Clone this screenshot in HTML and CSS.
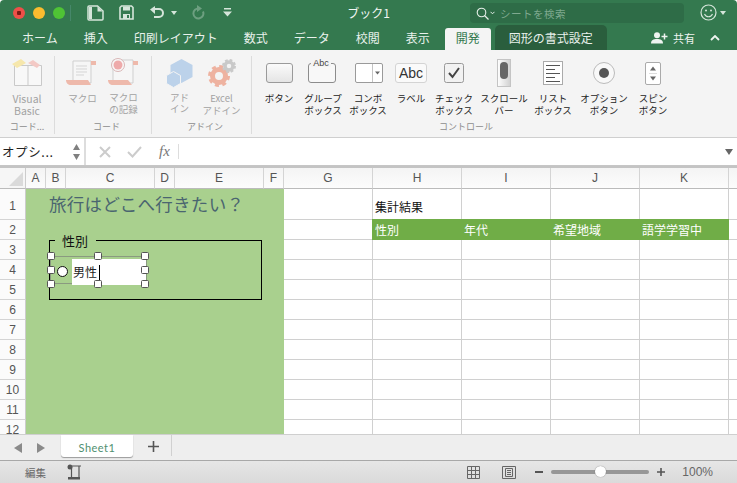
FILE: index.html
```html
<!DOCTYPE html>
<html lang="ja">
<head>
<meta charset="utf-8">
<title>ブック1</title>
<link rel="stylesheet" href="styles.css">
</head>
<body>
<div class="app">
  <header class="titlebar">
    <div class="tb-left">
      <span class="light red"></span><span class="light yellow"></span><span class="light green"></span>
      <span class="tb-div"></span>
      <svg class="qa qa-side" width="17" height="16" viewBox="0 0 17 16"><path d="M2 1h8.500l5.500 5v8a1 1 0 0 1-1 1H2a1 1 0 0 1-1-1V2a1 1 0 0 1 1-1z" fill="none" stroke="#d5e5da" stroke-width="1.500"/><path d="M2 2h3v12H2zM10.500 1.500 15.500 6.500h-5z" fill="#d5e5da"/></svg>
      <svg class="qa qa-save" width="15" height="15" viewBox="0 0 15 15"><path d="M1 2.500 2.500 1h10L14 2.500V14H1z" fill="none" stroke="#d5e5da" stroke-width="1.600"/><path d="M4 1.500h7v4H4zM4 9h7v5H4z" fill="#d5e5da"/><path d="M8 10h2v3H8z" fill="#34794f"/></svg>
      <svg class="qa qa-undo" width="16" height="13" viewBox="0 0 16 13"><path d="M5 11h5a4 4 0 0 0 0-8H3" fill="none" stroke="#d5e5da" stroke-width="2"/><path d="M1 3.500 6 0v8z" fill="#d5e5da"/></svg>
      <span class="caret qa-caret"></span>
      <svg class="qa qa-redo" width="14" height="15" viewBox="0 0 14 15"><path d="M8 3.500a5 5 0 1 0 4 3" fill="none" stroke="#6d9f80" stroke-width="2"/><path d="M6 0l5 3.500L6 7z" fill="#6d9f80"/></svg>
      <svg class="qa qa-more" width="9" height="9" viewBox="0 0 9 9"><path d="M1 0h7v1.400H1zM0 3.500h9L4.500 8.500z" fill="#d5e5da"/></svg>
    </div>
    <div class="doc-title">ブック1</div>
    <div class="tb-right">
      <div class="search">
        <svg width="13" height="13" viewBox="0 0 13 13"><circle cx="5.500" cy="5.500" r="4.300" fill="none" stroke="#e6efe9" stroke-width="1.100"/><path d="m8.500 8.500 4 4" stroke="#e6efe9" stroke-width="1.200"/></svg>
        <svg class="chev" width="5" height="4" viewBox="0 0 5 4"><path d="m.5.800 2 2 2-2" fill="none" stroke="#e6efe9"/></svg>
        <span class="search-text">シートを検索</span>
      </div>
      <svg class="smile" width="17" height="17" viewBox="0 0 17 17"><circle cx="8.500" cy="8.500" r="7.500" fill="none" stroke="#d5e5da" stroke-width="1.200"/><circle cx="6" cy="6.500" r="1" fill="#d5e5da"/><circle cx="11" cy="6.500" r="1" fill="#d5e5da"/><path d="M4.500 10a4.300 4.300 0 0 0 8 0" fill="none" stroke="#d5e5da" stroke-width="1.100"/></svg>
      <span class="caret"></span>
    </div>
  </header>

  <nav class="tabs">
    <span class="tab">ホーム</span><span class="tab">挿入</span><span class="tab">印刷レイアウト</span><span class="tab">数式</span><span class="tab">データ</span><span class="tab">校閲</span><span class="tab">表示</span>
    <span class="tab tab-active">開発</span>
    <span class="tab tab-shape">図形の書式設定</span>
    <div class="tabs-right">
      <svg width="17" height="12" viewBox="0 0 17 12"><circle cx="6" cy="3.200" r="3" fill="#eef4f0"/><path d="M0 11.500c0-3.500 2.500-4.500 6-4.500s6 1 6 4.500z" fill="#eef4f0"/><path d="M13.500 1.500v6M10.500 4.500h6" stroke="#eef4f0" stroke-width="1.500"/></svg>
      <span class="share">共有</span>
      <svg class="collapse" width="10" height="6" viewBox="0 0 10 6"><path d="M1 5l4-4 4 4" fill="none" stroke="#eef4f0" stroke-width="1.800"/></svg>
    </div>
  </nav>

  <section class="ribbon">
    <div class="group g-code">
      <div class="items">
        <div class="item w54 off">
          <svg class="ic" width="40" height="36" viewBox="0 0 40 36"><path d="M7.500 9.500h27v20h-27z" fill="#f8f8f8" stroke="#c9c9c9"/><path d="M21 9.500v20" stroke="#c9c9c9"/><path d="m5 8 9-5 5 4-9 5z" fill="#f6e7ac"/><path d="m21 7 5-3 7 5-3 3z" fill="#f3c9c5"/></svg>
          <span class="lbl lbl-latin">Visual<br>Basic</span>
        </div>
      </div>
      <div class="glabel">コード...</div>
    </div>
    <div class="group g-macro">
      <div class="items">
        <div class="item w41 off">
          <svg class="ic" width="40" height="36" viewBox="0 0 40 36"><path d="M10 5h18v22H10z" fill="#f6f6f6" stroke="#cfcfcf"/><path d="M28 5h5v4h-5z" fill="#eeb9ab"/><path d="M3 24h22l3 5H8c-3 0-5-2-5-5z" fill="#eeb9ab"/><path d="M13 10h11M13 13h11M13 16h11M13 19h8" stroke="#d5d5d5"/></svg>
          <span class="lbl">マクロ</span>
        </div>
        <div class="item w41 off">
          <svg class="ic" width="40" height="36" viewBox="0 0 40 36"><path d="M9 4h20v23H9z" fill="#f6f6f6" stroke="#cfcfcf"/><path d="M29 5h5v4h-5z" fill="#eeb9ab"/><path d="M4 24h20l4 5H9c-3 0-5-2-5-5z" fill="#eeb9ab"/><circle cx="14" cy="9" r="6.500" fill="#f8f8f8" stroke="#d9b5b5"/><circle cx="14" cy="9" r="4.500" fill="#eeaaaa"/></svg>
          <span class="lbl lbl-low">マクロ<br>の記録</span>
        </div>
      </div>
      <div class="glabel">コード</div>
    </div>
    <div class="group g-addin">
      <div class="items">
        <div class="item w41 off">
          <svg class="ic" width="40" height="36" viewBox="0 0 40 36"><path d="M21.500 3l11 6v12l-11 6-11-6V9z" fill="#bcd2ea"/><path d="M13.500 15.500l7 4v8l-7 4-7-4v-8z" fill="#bcd2ea" stroke="#f4f4f4"/></svg>
          <span class="lbl lbl-tight">アド<br>イン</span>
        </div>
        <div class="item w43 off">
          <svg class="ic" width="40" height="36" viewBox="0 0 40 36"><circle cx="17" cy="20" r="6.500" fill="none" stroke="#eeb2a0" stroke-width="5"/><circle cx="17" cy="20" r="9.500" fill="none" stroke="#eeb2a0" stroke-width="3" stroke-dasharray="4 3.450"/><circle cx="27" cy="10" r="4" fill="none" stroke="#c9c9c9" stroke-width="3.500"/><circle cx="27" cy="10" r="6" fill="none" stroke="#c9c9c9" stroke-width="2" stroke-dasharray="2.700 2"/></svg>
          <span class="lbl">Excel<br>アドイン</span>
        </div>
      </div>
      <div class="glabel">アドイン</div>
    </div>
    <div class="group g-control">
      <div class="items">
        <div class="item w44">
          <svg class="ic" width="40" height="36" viewBox="0 0 40 36"><defs><linearGradient id="btn" x1="0" y1="0" x2="0" y2="1"><stop offset="0" stop-color="#fbfbfb"/><stop offset="1" stop-color="#e4e4e4"/></linearGradient></defs><rect x="7.500" y="7.500" width="26" height="19" rx="2.500" fill="url(#btn)" stroke="#9a9a9a"/></svg>
          <span class="lbl">ボタン</span>
        </div>
        <div class="item w44">
          <svg class="ic" width="40" height="36" viewBox="0 0 40 36"><rect x="5.500" y="7.500" width="27" height="19" rx="2.500" fill="#f8f8f8" stroke="#8c8c8c"/><rect x="8" y="3" width="20" height="8" fill="#f4f4f4"/><text x="18" y="10" text-anchor="middle" class="abc-s">Abc</text></svg>
          <span class="lbl">グループ<br>ボックス</span>
        </div>
        <div class="item w46">
          <svg class="ic" width="40" height="36" viewBox="0 0 40 36"><rect x="7.500" y="7.500" width="27" height="19" rx="1.500" fill="#fff" stroke="#9a9a9a"/><path d="M24.500 8v18" stroke="#c4c4c4"/><path d="m27 15.500h5l-2.500 3z" fill="#666"/></svg>
          <span class="lbl">コンボ<br>ボックス</span>
        </div>
        <div class="item w40">
          <svg class="ic" width="40" height="36" viewBox="0 0 40 36"><rect x="4.500" y="7.500" width="31" height="19" rx="2.500" fill="#fafafa" stroke="#d4d4d4"/><text x="20" y="22" text-anchor="middle" class="abc-l">Abc</text></svg>
          <span class="lbl">ラベル</span>
        </div>
        <div class="item w46">
          <svg class="ic" width="40" height="36" viewBox="0 0 40 36"><rect x="10.500" y="7.500" width="19" height="19" rx="2" fill="#f2f2f2" stroke="#999"/><path d="m15 17 3.500 4L25 12" fill="none" stroke="#444" stroke-width="2"/></svg>
          <span class="lbl">チェック<br>ボックス</span>
        </div>
        <div class="item w54">
          <svg class="ic" width="40" height="36" viewBox="0 0 40 36"><defs><linearGradient id="scr" x1="0" y1="0" x2="1" y2="0"><stop offset="0" stop-color="#fff"/><stop offset="1" stop-color="#d0d0d0"/></linearGradient></defs><rect x="13.500" y="3.500" width="13" height="27" fill="url(#scr)" stroke="#c4c4c4"/><rect x="16" y="6" width="8" height="17" rx="4" fill="#666"/></svg>
          <span class="lbl">スクロール<br>バー</span>
        </div>
        <div class="item w44">
          <svg class="ic" width="40" height="36" viewBox="0 0 40 36"><rect x="10.500" y="5.500" width="19" height="23" fill="#fff" stroke="#aaa"/><path d="M13 9.500h14M13 13.500h9M13 17.500h14M13 21.500h9M13 25.500h14" stroke="#555"/></svg>
          <span class="lbl">リスト<br>ボックス</span>
        </div>
        <div class="item w58">
          <svg class="ic" width="40" height="36" viewBox="0 0 40 36"><circle cx="20" cy="17" r="10.500" fill="#f8f8f8" stroke="#bbb"/><circle cx="20" cy="17" r="5" fill="#555"/></svg>
          <span class="lbl">オプション<br>ボタン</span>
        </div>
        <div class="item w40">
          <svg class="ic" width="40" height="36" viewBox="0 0 40 36"><rect x="12.500" y="6.500" width="15" height="22" rx="1.500" fill="#fff" stroke="#aaa"/><path d="m20 10.500 3 4h-6zM20 24.500l3-4h-6z" fill="#666"/><path d="M16 17.500h8" stroke="#ddd"/></svg>
          <span class="lbl">スピン<br>ボタン</span>
        </div>
      </div>
      <div class="glabel glabel-control">コントロール</div>
    </div>
  </section>

  <section class="formula">
    <div class="namebox">
      <span class="name">オプシ...</span>
      <svg width="9" height="18" viewBox="0 0 9 18"><path d="M4.500 1 8 7H1zM4.500 17 8 11H1z" fill="#808080"/></svg>
    </div>
    <div class="fx-tools">
      <svg width="12" height="12" viewBox="0 0 12 12"><path d="m1 1 10 10M11 1 1 11" stroke="#ccc" stroke-width="2"/></svg>
      <svg class="fx-check" width="15" height="12" viewBox="0 0 15 12"><path d="m1 6 4.500 4.500L14 1" fill="none" stroke="#ccc" stroke-width="2"/></svg>
      <span class="fx">fx</span>
    </div>
    <div class="fx-input"></div>
    <svg class="fx-arrow" width="8" height="6" viewBox="0 0 8 6"><path d="M0 0h8L4 6z" fill="#666"/></svg>
  </section>

  <section class="sheet">
    <div class="corner"></div>
    <div class="ch w20">A</div><div class="ch w20">B</div><div class="ch w89">C</div><div class="ch w20">D</div><div class="ch w89">E</div><div class="ch w20">F</div><div class="ch w89">G</div><div class="ch w89">H</div><div class="ch w89">I</div><div class="ch w89">J</div><div class="ch w89">K</div><div class="ch fill"></div>

    <div class="body">
      <div class="rownums">
        <div class="rn r1">1</div><div class="rn">2</div><div class="rn">3</div><div class="rn">4</div><div class="rn">5</div><div class="rn">6</div><div class="rn">7</div><div class="rn">8</div><div class="rn">9</div><div class="rn">10</div><div class="rn">11</div><div class="rn">12</div>
      </div>
      <div class="panel">
        <h1 class="q">旅行はどこへ行きたい？</h1>
      </div>
      <div class="cells">
        <div class="row r1"><div class="c"></div><div class="c t">集計結果</div><div class="c"></div><div class="c"></div><div class="c"></div><div class="c end"></div></div>
        <div class="row hd"><div class="c"></div><div class="c th">性別</div><div class="c th">年代</div><div class="c th">希望地域</div><div class="c th">語学学習中</div><div class="c end"></div></div>
        <div class="row"><div class="c"></div><div class="c"></div><div class="c"></div><div class="c"></div><div class="c"></div><div class="c end"></div></div>
        <div class="row"><div class="c"></div><div class="c"></div><div class="c"></div><div class="c"></div><div class="c"></div><div class="c end"></div></div>
        <div class="row"><div class="c"></div><div class="c"></div><div class="c"></div><div class="c"></div><div class="c"></div><div class="c end"></div></div>
        <div class="row"><div class="c"></div><div class="c"></div><div class="c"></div><div class="c"></div><div class="c"></div><div class="c end"></div></div>
        <div class="row"><div class="c"></div><div class="c"></div><div class="c"></div><div class="c"></div><div class="c"></div><div class="c end"></div></div>
        <div class="row"><div class="c"></div><div class="c"></div><div class="c"></div><div class="c"></div><div class="c"></div><div class="c end"></div></div>
        <div class="row"><div class="c"></div><div class="c"></div><div class="c"></div><div class="c"></div><div class="c"></div><div class="c end"></div></div>
        <div class="row"><div class="c"></div><div class="c"></div><div class="c"></div><div class="c"></div><div class="c"></div><div class="c end"></div></div>
        <div class="row"><div class="c"></div><div class="c"></div><div class="c"></div><div class="c"></div><div class="c"></div><div class="c end"></div></div>
        <div class="row"><div class="c"></div><div class="c"></div><div class="c"></div><div class="c"></div><div class="c"></div><div class="c end"></div></div>
      </div>
      <div class="gbox"><span class="gbox-label">性別</span></div>
      <div class="opt-frame"></div>
      <div class="opt-radio"></div>
      <div class="opt-edit">男性<span class="cursor"></span></div>
      <span class="h hx1 hy1"></span><span class="h hx2 hy1"></span><span class="h hx3 hy1"></span>
      <span class="h hx1 hy2"></span><span class="h hx3 hy2"></span>
      <span class="h hx1 hy3"></span><span class="h hx2 hy3"></span><span class="h hx3 hy3"></span>
    </div>
  </section>

  <section class="sheettabs">
    <svg class="nav" width="8" height="10" viewBox="0 0 8 10"><path d="M8 0v10L0 5z" fill="#8a8a8a"/></svg>
    <svg class="nav nav2" width="8" height="10" viewBox="0 0 8 10"><path d="M0 0v10l8-5z" fill="#8a8a8a"/></svg>
    <div class="stab">Sheet1</div>
    <svg class="plus" width="11" height="11" viewBox="0 0 11 11"><path d="M5.500 0v11M0 5.500h11" stroke="#555" stroke-width="1.600"/></svg>
    <span class="st-div"></span>
  </section>

  <footer class="status">
    <span class="st-text">編集</span>
    <svg class="st-macro" width="16" height="16" viewBox="0 0 16 16"><circle cx="3" cy="3" r="2.500" fill="#555"/><path d="M5 2h9M12 2v11M4.500 3v10" fill="none" stroke="#555" stroke-width="1.200"/><path d="M1 13h12v2.500H1z" fill="#555"/></svg>
    <div class="st-right">
      <svg width="13" height="13" viewBox="0 0 13 13"><path d="M.5.500h12v12H.5zM4.500.500v12M8.500.500v12M.5 4.500h12M.5 8.500h12" fill="none" stroke="#666"/></svg>
      <svg class="st-page" width="14" height="13" viewBox="0 0 14 13"><path d="M.5.500h13v12H.5z" fill="none" stroke="#666"/><path d="M3.500 2.500h7v8h-7zM5 4.500h4M5 6.500h4M5 8.500h4" fill="none" stroke="#666"/></svg>
      <span class="minus"></span>
      <div class="slider"><span class="thumb"></span></div>
      <svg class="st-plus" width="8" height="8" viewBox="0 0 8 8"><path d="M4 0v8M0 4h8" stroke="#555" stroke-width="1.600"/></svg>
      <span class="zoomv">100%</span>
    </div>
  </footer>
</div>
</body>
</html>
```

FILE: styles.css
```css
* { box-sizing: border-box; }
html, body { margin: 0; padding: 0; }
body {
  width: 737px; height: 483px; overflow: hidden;
  font-family: "Noto Sans CJK JP", "Liberation Sans", sans-serif;
  background: #fff;
}
.app { width: 737px; height: 483px; display: flex; flex-direction: column; }

/* title bar */
.titlebar {
  height: 25px; flex: none; background: #34794f;
  display: grid; grid-template-columns: 1fr auto 1fr; align-items: center;
  border-radius: 4px 4px 0 0;
}
.tb-left { display: flex; align-items: center; padding-left: 13px; }
.light { width: 12px; height: 12px; border-radius: 50%; margin-right: 8px; flex: none; }
.red { background: radial-gradient(circle, #7a1a14 0 2px, #ee4f48 2.500px); }
.yellow { background: #fbbc2f; }
.green { background: #4fc435; }
.tb-div { width: 1px; height: 16px; background: #46876a; margin-left: -3px; flex: none; }
.qa { flex: none; display: block; }
.qa-side { margin-left: 16px; }
.qa-save { margin-left: 15px; }
.qa-undo { margin-left: 15px; }
.caret { width: 0; height: 0; border: 3.500px solid transparent; border-top: 4px solid #d5e5da; border-bottom: 0; display: block; }
.qa-caret { margin-left: 6px; }
.qa-redo { margin-left: 14px; }
.qa-more { margin-left: 18px; }
.doc-title { font-size: 12px; color: #f1f6f3; line-height: 25px; }
.tb-right { display: flex; align-items: center; justify-content: flex-end; }
.search {
  width: 214px; height: 20px; background: #2e6c47; border-radius: 4px;
  display: flex; align-items: center; padding-left: 6px; margin-top: 1px;
}
.chev { margin-left: 1px; }
.search-text { font-size: 10.500px; color: #7fa98f; margin-left: 5px; letter-spacing: .5px; }
.smile { margin-left: 16px; }
.tb-right .caret { margin: 0 11px 0 3px; }

/* tabs */
.tabs { height: 25px; flex: none; background: #34794f; display: flex; align-items: flex-end; padding-left: 9px; }
.tab { font-size: 12px; line-height: 22px; height: 25px; padding: 2px 13px 0; color: #e9f1ec; flex: none; white-space: nowrap; }
.tab-active { height: 22px; padding: 0 11px; margin-left: 2px; line-height: 20px; background: #f4f4f4; color: #34794f; border-radius: 3px 3px 0 0; }
.tab-shape { padding: 2px 14px 0; margin-left: 4px; background: #2a5e3d; border-radius: 5px 5px 0 0; }
.tabs-right { margin-left: auto; display: flex; align-items: center; height: 25px; padding: 0 17px 0 0; color: #eef4f0; }
.share { font-size: 11px; margin-left: 5px; }
.collapse { margin-left: 15px; }

/* ribbon */
.ribbon { height: 88px; flex: none; background: #f4f4f4; border-bottom: 1px solid #cfcfcf; display: flex; padding-top: 6px; }
.group { display: flex; flex-direction: column; border-right: 1px solid #dcdcdc; height: 78px; flex: none; }
.g-code { width: 55px; }
.g-macro { width: 97px; padding-left: 7px; }
.g-addin { width: 100px; padding-left: 7px; }
.g-control { flex: 1; border-right: 0; padding-left: 5px; }
.items { display: flex; height: 64px; }
.item { display: flex; flex-direction: column; align-items: center; flex: none; }
.w40 { width: 40px; } .w41 { width: 41px; } .w43 { width: 43px; } .w44 { width: 44px; }
.w46 { width: 46px; } .w54 { width: 54px; } .w58 { width: 58px; }
.ic { display: block; flex: none; }
.lbl { font-size: 9.500px; line-height: 11.500px; text-align: center; color: #1c1c1c; white-space: nowrap; margin-top: 1px; }
.off .lbl { color: #a2a2a2; }
.lbl-latin { font-size: 10.500px; line-height: 12px; }
.lbl-low { margin-top: 0; }
.lbl-tight { line-height: 10.500px; margin-top: 0; }
.glabel { font-size: 9px; line-height: 14px; color: #8d8d8d; text-align: center; margin-top: 1px; white-space: nowrap; }
.glabel-control { width: 418px; }
.abc-s { font: 9px "Liberation Sans", sans-serif; fill: #444; }
.abc-l { font: 14px "Liberation Sans", sans-serif; fill: #333; }

/* formula bar */
.formula { height: 28px; flex: none; display: flex; align-items: center; background: #fff; border-bottom: 1px solid #c6c6c6; position: relative; }
.namebox { width: 86px; height: 27px; display: flex; align-items: center; justify-content: space-between; padding: 0 3px 0 2px; border-right: 2px solid #ddd; flex: none; }
.name { font-size: 12.500px; color: #222; letter-spacing: .6px; white-space: nowrap; }
.fx-tools { width: 95px; height: 27px; display: flex; align-items: center; padding-left: 13px; flex: none; }
.fx-check { margin-left: 16px; }
.fx { font: italic 15px "Liberation Serif", serif; color: #777; margin-left: 17px; padding-right: 8px; border-right: 1px solid #ddd; line-height: 15px; }
.fx-input { flex: 1; }
.fx-arrow { margin-right: 4px; }

/* sheet */
.sheet {
  flex: 1; min-height: 0; overflow: hidden; position: relative;
  display: flex; flex-wrap: wrap; align-content: flex-start;
  border-top: 2px solid #c4c4c4;
}
.corner { width: 26px; height: 21px; background: #f6f6f6; border-right: 1px solid #ccc; border-bottom: 1px solid #bbb; position: relative; overflow: hidden; flex: none; }
.corner::after { content: ""; position: absolute; right: 2px; bottom: 2px; border-left: 14px solid transparent; border-bottom: 14px solid #dadada; }
.ch {
  height: 21px; flex: none; font: 12px/20px "Liberation Sans", sans-serif; color: #555; text-align: center;
  background: linear-gradient(#f4f4f4, #fcfcfc); border-right: 1px solid #d4d4d4; border-bottom: 1px solid #bbb;
}
.w20 { width: 20px; } .w89 { width: 89px; }
.ch.fill { flex: 1; border-right: 0; }
.body { width: 737px; height: 245px; display: flex; position: relative; overflow: hidden; }
.rownums { width: 26px; flex: none; }
.rn { width: 26px; height: 20px; font: 12px/20px "Liberation Sans", sans-serif; color: #555; text-align: center; background: #fbfbfb; border-right: 1px solid #ccc; border-bottom: 1px solid #d4d4d4; }
.rn.r1 { height: 31px; line-height: 35px; }
.panel { width: 258px; flex: none; background: #a9d08e; }
.q { margin: 2px 0 0 23px; font-size: 17.500px; line-height: 26px; font-weight: 400; color: #4a6570; letter-spacing: .3px; white-space: nowrap; }
.cells { flex: 1; }
.row { display: flex; height: 20px; }
.row.r1 { height: 31px; }
.c { width: 89px; flex: none; border-right: 1px solid #d0d0d0; border-bottom: 1px solid #d0d0d0; font-size: 12px; padding-left: 2px; color: #111; white-space: nowrap; }
.c.end { flex: 1; width: auto; border-right: 0; }
.t { line-height: 36px; }
.th { background: #70ad47; color: #fff; border-right: 0; border-bottom: 0; line-height: 21px; height: 21px; margin-top: -1px; padding-left: 3px; }
.th:nth-child(2) { margin-left: -1px; }
.th:nth-child(5) { width: 90px; }

/* floating form controls */
.gbox { position: absolute; left: 49px; top: 51px; width: 213px; height: 60px; border: 1px solid #000; }
.gbox-label { position: absolute; left: 5px; top: -7px; padding: 0 8px 0 7px; background: #a9d08e; font-size: 13px; line-height: 14px; color: #111; }
.opt-frame { position: absolute; left: 50px; top: 67px; width: 97px; height: 28px; border: 1px solid #8a9a80; }
.opt-radio { position: absolute; left: 57px; top: 77px; width: 11px; height: 11px; border-radius: 50%; background: #fff; border: 1.500px solid #111; }
.opt-edit { position: absolute; left: 72px; top: 70px; width: 74px; height: 26px; background: #fff; padding-left: 1px; font-size: 12px; line-height: 24px; color: #222; display: flex; align-items: center; }
.cursor { width: 1px; height: 15px; background: #000; margin-left: 2px; }
.h { position: absolute; width: 8px; height: 8px; background: #fff; border: 1px solid #555; border-radius: 1.500px; }
.hx1 { left: 47px; } .hx2 { left: 94px; } .hx3 { left: 141px; }
.hy1 { top: 63px; } .hy2 { top: 77px; } .hy3 { top: 91px; }

/* sheet tabs */
.sheettabs { height: 26px; flex: none; background: #eeeeee; border-top: 1px solid #cfcfcf; display: flex; align-items: center; padding-left: 14px; position: relative; }
.nav { flex: none; }
.nav2 { margin-left: 15px; }
.stab { width: 72px; height: 22px; margin: -4px 0 0 16px; background: #fff; border-radius: 0 0 3px 3px; box-shadow: 0 1px 1px #999; font: 11px/25px "Lato", "Liberation Sans", sans-serif; color: #4f9070; text-align: center; letter-spacing: .5px; }
.plus { margin-left: 15px; margin-top: -2px; flex: none; }
.st-div { width: 1px; height: 21px; background: #d0d0d0; margin: -5px 0 0 12px; }

/* status */
.status { height: 23px; flex: none; background: linear-gradient(#e6e6e6, #dadada); border-top: 1px solid #a8a8a8; display: flex; align-items: center; padding-left: 25px; }
.st-text { font-size: 10.500px; color: #666; }
.st-macro { margin-left: 21px; }
.st-right { margin-left: auto; display: flex; align-items: center; padding-right: 24px; }
.st-page { margin-left: 22px; }
.minus { width: 8px; height: 2px; background: #555; margin-left: 19px; }
.slider { width: 98px; height: 4px; border-radius: 2px; background: #979797; margin-left: 8px; position: relative; }
.thumb { position: absolute; left: 44px; top: -4px; width: 11px; height: 11px; border-radius: 50%; background: #fff; box-shadow: 0 0 1px #666; }
.st-plus { margin-left: 8px; }
.zoomv { font: 12px "Liberation Sans", sans-serif; color: #666; margin-left: 17px; }
```
